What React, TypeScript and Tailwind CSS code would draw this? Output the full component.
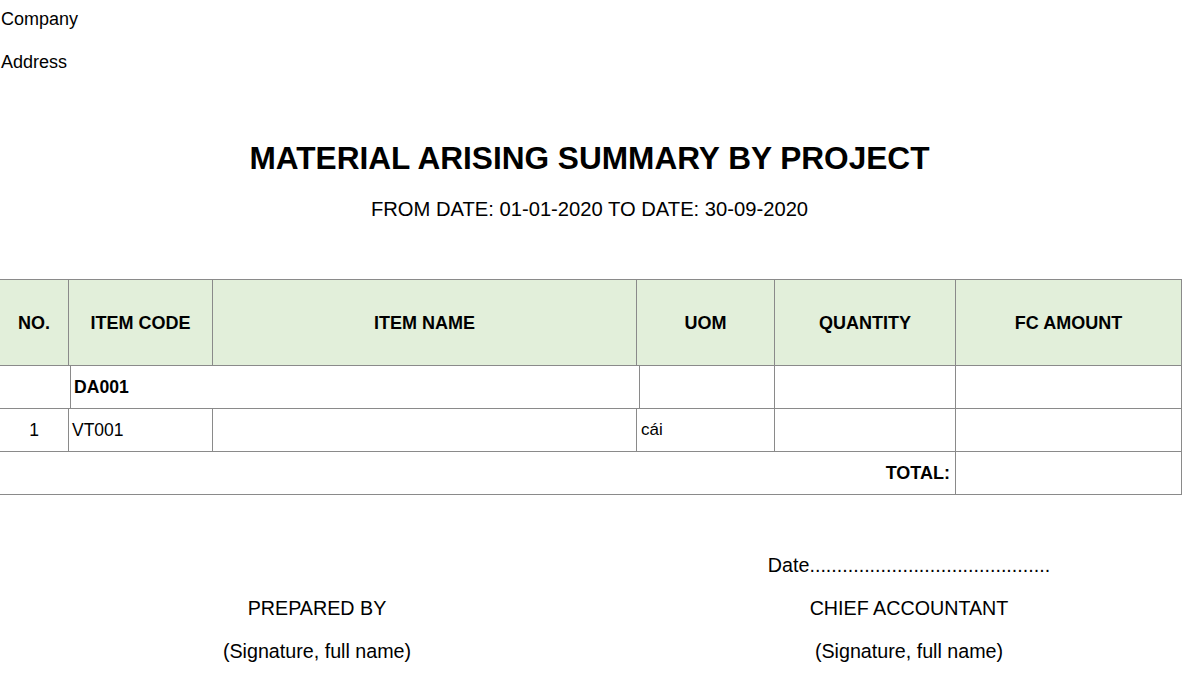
import React from "react";

const font = { fontFamily: '"Liberation Sans", Arial, sans-serif' };

export default function App() {
  const dots = ".".repeat(44);
  return (
    <div className="w-[1191px] h-[693px] bg-white text-black overflow-hidden" style={font}>
      <div className="h-[39px] flex items-center pl-[1px] text-[18px]">Company</div>
      <div className="h-[46px] flex items-center pl-[1px] text-[18px]">Address</div>

      <div className="mt-[54px] w-[1179px] h-[40px] flex items-center justify-center text-[31.6px] font-bold">
        MATERIAL ARISING SUMMARY BY PROJECT
      </div>
      <div className="mt-[15px] w-[1179px] h-[30px] flex items-center justify-center text-[20.2px]">
        FROM DATE: 01-01-2020 TO DATE: 30-09-2020
      </div>

      <div className="mt-[55px] w-[1182px] border-t border-[#8a8a8a]">
        {/* header */}
        <div className="flex h-[86px] border-b border-[#8a8a8a] bg-[#e2efda] text-[18px] font-bold">
          <div className="w-[69px] border-r border-[#8a8a8a] flex items-center justify-center pt-[2px]">NO.</div>
          <div className="w-[144px] border-r border-[#8a8a8a] flex items-center justify-center pt-[2px]">ITEM CODE</div>
          <div className="w-[424px] border-r border-[#8a8a8a] flex items-center justify-center pt-[2px]">ITEM NAME</div>
          <div className="w-[138px] border-r border-[#8a8a8a] flex items-center justify-center pt-[2px]">UOM</div>
          <div className="w-[181px] border-r border-[#8a8a8a] flex items-center justify-center pt-[2px]">QUANTITY</div>
          <div className="w-[226px] border-r border-[#8a8a8a] flex items-center justify-center pt-[2px]">FC AMOUNT</div>
        </div>
        {/* project row */}
        <div className="flex h-[43px] border-b border-[#8a8a8a] text-[17.6px]">
          <div className="w-[71px] border-r border-[#8a8a8a]"></div>
          <div className="w-[569px] border-r border-[#8a8a8a] flex items-center pl-[3px] font-bold">DA001</div>
          <div className="w-[135px] border-r border-[#8a8a8a]"></div>
          <div className="w-[181px] border-r border-[#8a8a8a]"></div>
          <div className="w-[226px] border-r border-[#8a8a8a]"></div>
        </div>
        {/* item row */}
        <div className="flex h-[43px] border-b border-[#8a8a8a] text-[17.5px]">
          <div className="w-[69px] border-r border-[#8a8a8a] flex items-center justify-center">1</div>
          <div className="w-[144px] border-r border-[#8a8a8a] flex items-center pl-[3px]">VT001</div>
          <div className="w-[424px] border-r border-[#8a8a8a]"></div>
          <div className="w-[138px] border-r border-[#8a8a8a] flex items-center pl-[4px] text-[17px]">cái</div>
          <div className="w-[181px] border-r border-[#8a8a8a]"></div>
          <div className="w-[226px] border-r border-[#8a8a8a]"></div>
        </div>
        {/* total row */}
        <div className="flex h-[43px] border-b border-[#8a8a8a] text-[18px]">
          <div className="w-[956px] border-r border-[#8a8a8a] flex items-center justify-end pr-[5px] font-bold">TOTAL:</div>
          <div className="w-[226px] border-r border-[#8a8a8a]"></div>
        </div>
      </div>

      <div className="mt-[49px] grid grid-cols-[634px_550px] text-[19.7px]">
        <div className="flex flex-col items-center">
          <div className="h-[43px]"></div>
          <div className="h-[43px] flex items-center">PREPARED BY</div>
          <div className="h-[43px] flex items-center">(Signature, full name)</div>
        </div>
        <div className="flex flex-col items-center">
          <div className="h-[43px] flex items-center">Date{dots}</div>
          <div className="h-[43px] flex items-center">CHIEF ACCOUNTANT</div>
          <div className="h-[43px] flex items-center">(Signature, full name)</div>
        </div>
      </div>
    </div>
  );
}
